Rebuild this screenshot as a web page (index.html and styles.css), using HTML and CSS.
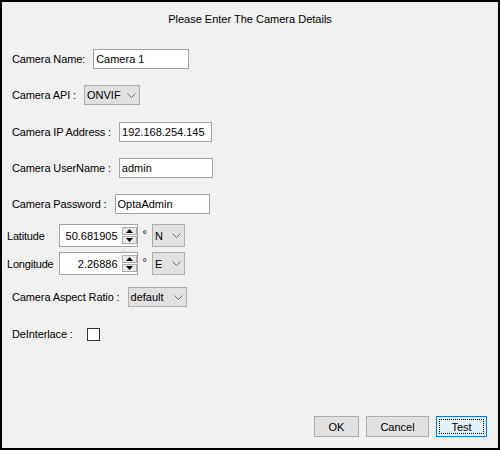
FILE: index.html
```html
<!DOCTYPE html>
<html>
<head>
<meta charset="utf-8">
<link rel="stylesheet" href="styles.css">
</head>
<body>
<div class="window">
  <div class="title">Please Enter The Camera Details</div>

  <div class="form">
    <div class="row r-name">
      <span class="lbl">Camera Name:</span>
      <input class="field w96" type="text" value="Camera 1">
    </div>
    <div class="row r-api">
      <span class="lbl">Camera API :</span>
      <div class="combo w56"><span>ONVIF</span>
        <svg class="chev" width="9" height="5" viewBox="0 0 9 5"><polyline points="0.5,0.5 4.5,4.5 8.5,0.5" fill="none" stroke="#6d6d6d" stroke-width="1"/></svg>
      </div>
    </div>
    <div class="row r-ip">
      <span class="lbl">Camera IP Address :</span>
      <input class="field w93" type="text" value="192.168.254.145">
    </div>
    <div class="row r-user">
      <span class="lbl">Camera UserName :</span>
      <input class="field w94" type="text" value="admin">
    </div>
    <div class="row r-pass">
      <span class="lbl">Camera Password :</span>
      <input class="field w95" type="text" value="OptaAdmin">
    </div>

    <div class="coords">
      <span class="clbl">Latitude</span>
      <div class="spinner">
        <span class="spin-val">50.681905</span>
        <div class="spin-btns">
          <span class="spin-btn"><svg width="7" height="4" viewBox="0 0 7 4"><polygon points="3.5,0 7,4 0,4" fill="#000"/></svg></span>
          <span class="spin-btn"><svg width="7" height="4" viewBox="0 0 7 4"><polygon points="0,0 7,0 3.5,4" fill="#000"/></svg></span>
        </div>
      </div>
      <span class="deg">°</span>
      <div class="combo w33 tall"><span>N</span>
        <svg class="chev" width="9" height="5" viewBox="0 0 9 5"><polyline points="0.5,0.5 4.5,4.5 8.5,0.5" fill="none" stroke="#6d6d6d" stroke-width="1"/></svg>
      </div>

      <span class="clbl">Longitude</span>
      <div class="spinner">
        <span class="spin-val">2.26886</span>
        <div class="spin-btns">
          <span class="spin-btn"><svg width="7" height="4" viewBox="0 0 7 4"><polygon points="3.5,0 7,4 0,4" fill="#000"/></svg></span>
          <span class="spin-btn"><svg width="7" height="4" viewBox="0 0 7 4"><polygon points="0,0 7,0 3.5,4" fill="#000"/></svg></span>
        </div>
      </div>
      <span class="deg">°</span>
      <div class="combo w33 tall"><span>E</span>
        <svg class="chev" width="9" height="5" viewBox="0 0 9 5"><polyline points="0.5,0.5 4.5,4.5 8.5,0.5" fill="none" stroke="#6d6d6d" stroke-width="1"/></svg>
      </div>
    </div>

    <div class="row r-aspect">
      <span class="lbl">Camera Aspect Ratio :</span>
      <div class="combo w59"><span>default</span>
        <svg class="chev" width="9" height="5" viewBox="0 0 9 5"><polyline points="0.5,0.5 4.5,4.5 8.5,0.5" fill="none" stroke="#6d6d6d" stroke-width="1"/></svg>
      </div>
    </div>
    <div class="row r-deint">
      <span class="lbl">DeInterlace :</span>
      <span class="check"></span>
    </div>
  </div>

  <div class="buttons">
    <button class="btn b-ok">OK</button>
    <button class="btn b-cancel">Cancel</button>
    <button class="btn b-test"><span class="focus">Test</span></button>
  </div>
</div>
</body>
</html>
```

FILE: styles.css
```css
* { box-sizing: border-box; }

html, body {
  margin: 0;
  padding: 0;
  background: #f0f0f0;
}

body {
  font-family: "Liberation Sans", Arial, sans-serif;
  font-size: 11px;
  line-height: 14px;
  color: #000;
}

.window {
  width: 500px;
  height: 450px;
  border: 2px solid #000;
  background: #f0f0f0;
  display: flex;
  flex-direction: column;
}

.title {
  padding-top: 10px;
  text-align: center;
  height: 24px;
}

.form {
  display: flex;
  flex-direction: column;
  margin-top: 23px;
}

.row {
  display: flex;
  align-items: center;
  gap: 8px;
  height: 20px;
  padding-left: 10px;
}

.r-api { margin-top: 16px; }
.r-ip { margin-top: 17px; }
.r-user { margin-top: 16px; }
.r-pass { margin-top: 16px; }
.r-aspect { margin-top: 12px; }
.r-deint { margin-top: 17px; }

.lbl {
  white-space: nowrap;
  letter-spacing: -0.12px;
}

.field {
  height: 20px;
  border: 1px solid #a2a2a2;
  background: #fff;
  padding: 0 2px;
  margin: 0;
  font-family: "Liberation Sans", Arial, sans-serif;
  font-size: 11px;
  color: #000;
  outline: none;
}
.w93 { width: 93px; }
.w94 { width: 94px; }
.w95 { width: 95px; }
.w96 { width: 96px; }

.combo {
  height: 20px;
  border: 1px solid #adadad;
  background: #e1e1e1;
  display: flex;
  align-items: center;
  justify-content: space-between;
  padding: 0 3px 0 2px;
}
.combo.tall { height: 23px; }
.w56 { width: 56px; }
.w59 { width: 59px; }
.w33 { width: 33px; }
.chev { display: block; flex: none; }

.coords {
  display: grid;
  grid-template-columns: auto 79px auto 33px;
  column-gap: 5px;
  row-gap: 5px;
  align-items: center;
  justify-content: start;
  padding-left: 5px;
  margin-top: 10px;
}

.clbl { letter-spacing: -0.2px; }

.spinner {
  height: 23px;
  border: 1px solid #a2a2a2;
  background: #fff;
  display: flex;
  align-items: stretch;
  padding: 2px 0 2px 0;
}
.spin-val {
  flex: 1;
  text-align: right;
  padding-right: 4px;
  align-self: center;
}
.spin-btns {
  width: 15px;
  display: flex;
  flex-direction: column;
  gap: 1px;
}
.spin-btn {
  flex: 1;
  border: 1px solid #adadad;
  background: #e9e9e9;
  display: flex;
  align-items: center;
  justify-content: center;
}
.spin-btn svg { display: block; }

.deg {
  align-self: start;
  padding-top: 3px;
}

.check {
  width: 13px;
  height: 13px;
  border: 1px solid #333;
  background: #fff;
  margin-left: 6px;
}

.buttons {
  margin-top: auto;
  display: flex;
  justify-content: flex-end;
  gap: 7px;
  padding: 0 11px 11px 0;
}

.btn {
  height: 21px;
  border: 1px solid #adadad;
  background: #e1e1e1;
  font-family: "Liberation Sans", Arial, sans-serif;
  font-size: 11px;
  color: #000;
  padding: 0;
  margin: 0;
}
.b-ok { width: 45px; }
.b-cancel { width: 63px; }
.b-test {
  width: 51px;
  border-color: #0078d7;
  background: #e5f1fb;
  padding: 2px;
}
.focus {
  display: flex;
  align-items: center;
  justify-content: center;
  height: 100%;
  border: 1px dotted #000;
}
```
